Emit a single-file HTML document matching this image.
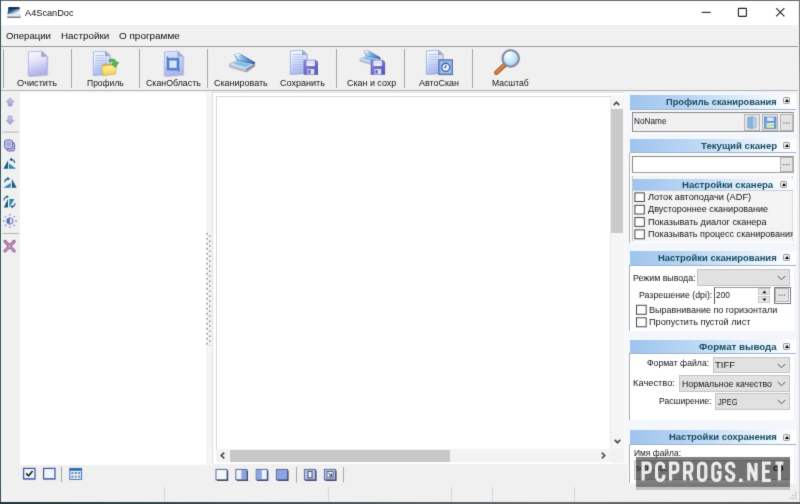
<!DOCTYPE html>
<html>
<head>
<meta charset="utf-8">
<title>A4ScanDoc</title>
<style>
*{box-sizing:border-box;margin:0;padding:0}
html,body{width:800px;height:504px;overflow:hidden;background:#f0f0f0}
body{font-family:"Liberation Sans",sans-serif;font-size:9.2px;color:#1a1a1a;position:relative}
.abs{position:absolute}
#win{position:absolute;left:0;top:0;width:800px;height:504px;background:#f0f0f0;overflow:hidden;will-change:transform;opacity:.9999;filter:url(#soft)}
#titlebar{position:absolute;left:1px;top:1px;width:797px;height:24px;background:#ffffff}
#title{position:absolute;left:25px;top:5px;font-size:10.4px;line-height:14px;color:#222;transform-origin:0 50%;transform:scaleX(.9);white-space:nowrap}
#menubar{position:absolute;left:1px;top:25px;width:797px;height:21px;background:#f1f1f1}
.mi{position:absolute;top:4px;font-size:10.6px;line-height:14px;color:#222;white-space:nowrap;transform-origin:0 50%;transform:scaleX(.92)}
#toolbar{position:absolute;left:1px;top:46px;width:797px;height:45px;background:#f0f0f0;border-top:1px solid #9a9a9a;border-bottom:1px solid #b4b4b4}
.tsep{position:absolute;top:49px;width:1px;height:39px;background:#a8a8a8}
.tl{position:absolute;top:77px;height:12px;line-height:12px;font-size:9.3px;color:#222;text-align:center;white-space:nowrap}
.ico{position:absolute}
#leftbar{position:absolute;left:2px;top:92px;width:18px;height:392px;background:#f0f0f0}
#list{position:absolute;left:20px;top:92px;width:186px;height:373px;background:#fff}
#split{position:absolute;left:206px;top:92px;width:7px;height:373px;background:#f5f5f5}
#canvas{position:absolute;left:212px;top:92px;width:413px;height:372px;background:#fff;border-left:1px solid #e0e0e0;border-top:1px solid #e4e4e4}
#cinner{position:absolute;left:2.500px;top:2.500px;width:395.500px;height:354.500px;border:1px solid #d6d6d6;border-right-color:#e8e8e8;border-bottom-color:#e8e8e8;background:#fff}
#vsb{position:absolute;left:398px;top:2px;width:13px;height:354px;background:#f5f5f5}
#hsb{position:absolute;left:3px;top:356px;width:395px;height:13px;background:#f3f3f3}
#rpanel{position:absolute;left:627px;top:92px;width:170px;height:392px;background:#f3f7fc}
.hdr{position:absolute;height:15px;background:linear-gradient(90deg,#9fc4ee 0%,#b9d5f3 35%,#e6f0fb 75%,#ffffff 100%);border-bottom:1px solid #9fb4cc}
.hdr span{position:absolute;right:19px;top:1px;font-weight:bold;font-size:9.6px;line-height:13px;color:#1c5a72;white-space:nowrap}
.cb{position:absolute;width:7px;height:7px;background:#ececec;border:1px solid #999;border-radius:1.500px}
.cb:after{content:"";position:absolute;left:1px;top:1px;border-left:2px solid transparent;border-right:2px solid transparent;border-bottom:3px solid #000}
.chk{position:absolute;width:10.400px;height:9.800px;background:#fff;border:1px solid #4a4a4a}
.tx{position:absolute;height:12px;line-height:12px;white-space:nowrap;transform-origin:0 50%}
.combo{position:absolute;background:#e1e1e1;border:1px solid #c4c4c4}
.combo span{position:absolute;left:3px;top:2px;line-height:12px;white-space:nowrap}
.combo svg{position:absolute;right:3px;top:5px}
.btn{position:absolute;background:#e4e4e4;border:1px solid #b4b4b4}
#status{position:absolute;left:1px;top:485px;width:797px;height:17px;background:#f0f0f0}
</style>
</head>
<body>
<div id="win">
  <div class="abs" style="left:0;top:0;width:800px;height:1px;background:#6c6c6c"></div>
  <div class="abs" style="left:0;top:0;width:1.3px;height:504px;background:#33555c"></div>
  <div class="abs" style="left:1.300px;top:25px;width:1px;height:477px;background:#fafafa"></div>
  <div class="abs" style="left:798px;top:1px;width:1.200px;height:502px;background:#f1f3f5"></div>
  <div class="abs" style="left:799px;top:0;width:1px;height:504px;background:linear-gradient(180deg,#757575 0%,#8a8a8a 12%,#c4c4c4 30%,#d8dadc 60%,#cfd3d6 100%)"></div>
  <div class="abs" style="left:0;top:501.500px;width:800px;height:1px;background:#d4e4ec"></div>
  <div class="abs" style="left:0;top:502.400px;width:800px;height:1.600px;background:linear-gradient(90deg,#26343c 0%,#4a545a 40%,#6a6a6a 70%,#5a5a5a 100%)"></div>

  <div id="titlebar"></div>
    <!-- title icon -->
  <svg class="ico" style="left:6px;top:6px" width="16" height="13" viewBox="0 0 16 13">
    <defs><linearGradient id="gTi" x1="0" y1="0" x2="1" y2="1"><stop offset="0" stop-color="#0c2446"/><stop offset=".42" stop-color="#2c5686"/><stop offset=".75" stop-color="#dce8f4"/><stop offset="1" stop-color="#ffffff"/></linearGradient></defs>
    <path d="M2.600 1.200 H13.400 L14.600 8 H1.400 Z" fill="url(#gTi)"/>
    <path d="M2.600 1.200 H13.400 L13.700 2.800 H2.300 Z" fill="#0e2240"/>
    <path d="M1.400 8 H14.600 L14.800 11 H1.200 Z" fill="#d4dce6"/>
    <path d="M2.600 8.400 H13.400 L13.600 9.600 H2.400 Z" fill="#f4f8fc"/>
    <path d="M1.200 10.800 H14.800 L14.600 11.800 H1.400 Z" fill="#46525e"/>
  </svg>
  <!-- window controls -->
  <svg class="ico" style="left:690px;top:1px" width="108" height="24" viewBox="0 0 108 24">
    <path d="M11.700 11.400 H20.700" stroke="#222" stroke-width="1.100"/>
    <rect x="48.400" y="7.400" width="8" height="8" fill="none" stroke="#222" stroke-width="1.100" rx=".6"/>
    <path d="M86.200 7.200 L94.400 15.400 M94.400 7.200 L86.200 15.400" stroke="#222" stroke-width="1.100"/>
  </svg>
  <div id="menubar">
              </div>
  <div id="toolbar"></div>
  <svg width="0" height="0" style="position:absolute">
    <defs>
      <filter id="soft" x="0" y="0" width="100%" height="100%" color-interpolation-filters="sRGB"><feConvolveMatrix order="3" kernelMatrix="0.012 0.082 0.012 0.082 0.624 0.082 0.012 0.082 0.012" divisor="1" edgeMode="duplicate" preserveAlpha="true"/></filter>
      <linearGradient id="gPage" x1="0" y1="0" x2="0.25" y2="1">
        <stop offset="0" stop-color="#fbfbff"/><stop offset=".45" stop-color="#e4e4fa"/><stop offset="1" stop-color="#b2b2ea"/>
      </linearGradient>
      <linearGradient id="gPageB" x1="0" y1="0" x2="0.3" y2="1">
        <stop offset="0" stop-color="#f8faff"/><stop offset=".5" stop-color="#d8e2fa"/><stop offset="1" stop-color="#aab8ee"/>
      </linearGradient>
      <linearGradient id="gFold" x1="0" y1="1" x2="1" y2="0">
        <stop offset="0" stop-color="#8890b8"/><stop offset="1" stop-color="#d8dcf0"/>
      </linearGradient>
      <linearGradient id="gFolder" x1="0" y1="0" x2="0" y2="1">
        <stop offset="0" stop-color="#fff6a8"/><stop offset="1" stop-color="#f0cc58"/>
      </linearGradient>
      <linearGradient id="gFloppy" x1="0" y1="0" x2="1" y2="1">
        <stop offset="0" stop-color="#8e90e0"/><stop offset="1" stop-color="#5252b4"/>
      </linearGradient>
      <linearGradient id="gScan" x1="0" y1="0" x2="1" y2="0">
        <stop offset="0" stop-color="#e8f4ff"/><stop offset=".5" stop-color="#6aa8e4"/><stop offset="1" stop-color="#2858b0"/>
      </linearGradient>
      <radialGradient id="gLens" cx=".4" cy=".35" r=".7">
        <stop offset="0" stop-color="#f4fcff"/><stop offset=".6" stop-color="#c4e6fa"/><stop offset="1" stop-color="#8cc4ec"/>
      </radialGradient>
      <linearGradient id="gHandle" x1="0" y1="0" x2="1" y2="1">
        <stop offset="0" stop-color="#f0a060"/><stop offset="1" stop-color="#b86028"/>
      </linearGradient>
      <symbol id="sPage" viewBox="0 0 32 32">
        <path d="M8.4 5.4 L21.5 4.6 L26.6 9.6 L26.4 28.2 L8.2 29.6 Z" fill="#8c8ca8" opacity=".35" transform="translate(.8,.6)"/>
        <path d="M7.4 4.8 L20.8 4.2 L26 9.2 L26 27.6 L7.2 29 Z" fill="url(#gPage)" stroke="#a4a4d8" stroke-width=".7"/>
        <path d="M20.8 4.2 L26 9.2 L20.6 9.6 Z" fill="url(#gFold)" stroke="#8c90b8" stroke-width=".5"/>
      </symbol>
      <symbol id="sDoc" viewBox="0 0 32 32">
        <path d="M4.4 4.8 L16.6 4.2 L21 8.6 L21 27.2 L4.2 28.4 Z" fill="#8c8ca8" opacity=".35" transform="translate(.8,.6)"/>
        <path d="M4.4 4.8 L16.6 4.2 L21 8.6 L21 27.2 L4.2 28.4 Z" fill="url(#gPageB)" stroke="#8ea6d8" stroke-width=".7"/>
        <path d="M16.6 4.2 L21 8.6 L16.4 9 Z" fill="url(#gFold)" stroke="#8c90b8" stroke-width=".5"/>
        <g stroke="#9cb2e4" stroke-width=".9" opacity=".7">
          <path d="M6.5 8.5h8.5M6.5 11h11.5M6.5 13.5h11.5M6.5 16h11.5M6.5 18.5h11.5M6.5 21h11.5M6.5 23.500h11.5"/>
        </g>
      </symbol>
      <symbol id="sFloppy" viewBox="0 0 16 17">
        <path d="M1 1.2 H13.2 L15.4 3.4 V16 H1 Z" fill="url(#gFloppy)" stroke="#4a4aa0" stroke-width=".5"/>
        <rect x="3.6" y="1.6" width="8.6" height="5.6" fill="#eef0fc"/>
        <rect x="4" y="3.4" width="7.8" height=".9" fill="#c4c8e8"/>
        <rect x="4.6" y="10.4" width="7" height="5.4" fill="#dfe1f4"/>
        <rect x="5.6" y="11.4" width="2.2" height="3.6" fill="#5a5ab8"/>
      </symbol>
      <symbol id="sScanner" viewBox="0 0 28 20">
        <path d="M2 14.5 L9 10 L27 13 L19 19.500 Z" fill="#55607a" opacity=".45"/>
        <path d="M1.4 11.2 L9 7.4 L26.6 10.6 L26.600 13.200 L17.6 18.6 L1.4 13.8 Z" fill="#dfe6f0" stroke="#8894aa" stroke-width=".6"/>
        <path d="M1.4 11.2 L17.6 15.8 L17.6 18.6 L1.4 13.8 Z" fill="#b8c2d2"/>
        <path d="M17.6 15.8 L26.6 10.6 L26.600 13.200 L17.6 18.6 Z" fill="#8a94aa"/>
        <path d="M4.6 10.6 L9.4 8.4 L23.6 11 L17.4 14.4 Z" fill="#7ec0f0"/>
        <path d="M6.5 1.600 L11.5 0.8 L27 9.6 L26.2 11 L9.5 7.2 Z" fill="url(#gScan)" stroke="#34508c" stroke-width=".6"/>
        <path d="M6.5 1.600 L11.5 0.8 L13 1.8 L8.5 3 Z" fill="#f4f8ff"/>
      </symbol>
    </defs>
  </svg>

  <div class="tsep" style="left:3px"></div>
  <div class="tsep" style="left:71px"></div>
  <div class="tsep" style="left:139px"></div>
  <div class="tsep" style="left:207px"></div>
  <div class="tsep" style="left:336px"></div>
  <div class="tsep" style="left:404px"></div>
  <div class="tsep" style="left:472px"></div>

  <!-- 1 Очистить -->
  <svg class="ico" style="left:21px;top:47px" width="32" height="32"><use href="#sPage"/></svg>
  
  <!-- 2 Профиль -->
  <svg class="ico" style="left:89px;top:47px" width="32" height="32" viewBox="0 0 32 32">
    <use href="#sDoc"/>
    <path d="M13.400 17.800 L17.400 16.600 L19 17.800 L26.600 16.400 L26.600 26.800 L13.800 28.600 Z" fill="#e4b43c" stroke="#c49828" stroke-width=".4"/>
    <path d="M13 19.600 L27.200 17.600 L26.600 26.800 L13.800 28.800 Z" fill="url(#gFolder)" stroke="#d0a830" stroke-width=".4"/>
    <path d="M20.400 12.600 C24 11.200 27 12.600 27.400 15.600 L29.600 15.200 L26.400 20.400 L22.400 17 L24.600 16.600 C24.400 14.800 22.800 14 20.400 14.800 Z" fill="#58bc4c" stroke="#2c8428" stroke-width=".6"/>
  </svg>
  
  <!-- 3 СканОбласть -->
  <svg class="ico" style="left:157px;top:47px" width="32" height="32" viewBox="0 0 32 32">
    <use href="#sPage"/>
    <path d="M7.4 4.8 L20.8 4.2 L26 9.2 L26 27.6 L7.2 29 Z" fill="#9cc0f8" opacity=".35"/>
    <rect x="11" y="12.200" width="10" height="10" fill="#d4e6ff" stroke="#5a82c8" stroke-width="2.700"/>
    <path d="M10.400 9.600v3M21.600 21v3.400" stroke="#5a82c8" stroke-width="1.500"/>
  </svg>
  
  <!-- 4 Сканировать -->
  <svg class="ico" style="left:228px;top:52.500px" width="28" height="20"><use href="#sScanner"/></svg>
  
  <!-- 5 Сохранить -->
  <svg class="ico" style="left:286px;top:46px" width="32" height="32" viewBox="0 0 32 32"><use href="#sDoc"/></svg>
  <svg class="ico" style="left:302.500px;top:58.500px" width="15.500" height="16.500"><use href="#sFloppy"/></svg>
  
  <!-- 6 Скан и сохр -->
  <svg class="ico" style="left:357.500px;top:49.500px" width="24" height="16"><use href="#sScanner"/></svg>
  <svg class="ico" style="left:370px;top:58.500px" width="15.500" height="16.500"><use href="#sFloppy"/></svg>
  
  <!-- 7 АвтоСкан -->
  <svg class="ico" style="left:422px;top:46px" width="32" height="32" viewBox="0 0 32 32"><use href="#sDoc"/></svg>
  <svg class="ico" style="left:437.500px;top:59px" width="15.500" height="16.500" viewBox="0 0 16 17">
    <rect x=".8" y=".8" width="14.4" height="15.400" fill="#7e9cd0" stroke="#4a5c94" stroke-width=".8"/>
    <rect x="2.4" y="2.400" width="11.200" height="12.200" fill="#a4c0ea"/>
    <circle cx="8" cy="8.600" r="4.200" fill="#eaf4ff" stroke="#3c64b4" stroke-width="1.400"/>
    <path d="M8 6.200v2.600h-1.600" stroke="#24408c" stroke-width="1" fill="none"/>
  </svg>
  
  <!-- 8 Масштаб -->
  <svg class="ico" style="left:492px;top:47px" width="32" height="32" viewBox="0 0 32 32">
    <path d="M13.4 17.200 L4.4 25.600" stroke="#8c4a20" stroke-width="4.600" stroke-linecap="round"/>
    <path d="M13.4 17.200 L4.4 25.600" stroke="url(#gHandle)" stroke-width="3.200" stroke-linecap="round"/>
    <circle cx="18.700" cy="11.400" r="8" fill="url(#gLens)" stroke="#8c98ac" stroke-width="2"/>
    <circle cx="18.700" cy="11.400" r="8.900" fill="none" stroke="#5c6880" stroke-width=".5"/>
    <path d="M13.600 9.200 C14.600 6.400 17.400 5 20 5.400" stroke="#ffffff" stroke-width="1.400" fill="none" opacity=".9"/>
  </svg>
  
  <div id="leftbar"></div>
  <div id="list"></div>
  <div id="split"></div>
  <div id="canvas">
    <div id="cinner"></div>
    <div id="vsb">
      <div class="abs" style="left:0;top:13.500px;width:12px;height:124.500px;background:#cacaca"></div>
      <svg class="abs" style="left:2.400px;top:5.800px" width="7" height="5" viewBox="0 0 7 5"><path d="M.7 4.200 L3.500 1.300 L6.300 4.200" stroke="#505050" stroke-width="1.700" fill="none"/></svg>
      <svg class="abs" style="left:2.600px;top:344px" width="7" height="5" viewBox="0 0 7 5"><path d="M.7 .8 L3.500 3.700 L6.300 .8" stroke="#505050" stroke-width="1.700" fill="none"/></svg>
    </div>
    <div id="hsb">
      <div class="abs" style="left:14px;top:1px;width:220px;height:11.500px;background:#c8c8c8"></div>
      <svg class="abs" style="left:3.800px;top:2.900px" width="5" height="7" viewBox="0 0 5 7"><path d="M4.200 .7 L1.300 3.500 L4.200 6.300" stroke="#484848" stroke-width="1.700" fill="none"/></svg>
      <svg class="abs" style="left:385px;top:2.900px" width="5" height="7" viewBox="0 0 5 7"><path d="M.8 .7 L3.700 3.500 L.8 6.300" stroke="#505050" stroke-width="1.700" fill="none"/></svg>
    </div>
    <div class="abs" style="left:398px;top:356px;width:14px;height:13.500px;background:#f2f2f2"></div>
  </div>
  <!-- left vertical toolbar icons -->
  <svg class="ico" style="left:2px;top:92px" width="18" height="170" viewBox="0 0 18 170">
    <defs>
      <linearGradient id="gArr" x1="0" y1="0" x2="0" y2="1"><stop offset="0" stop-color="#ccd0ea"/><stop offset="1" stop-color="#989fcf"/></linearGradient>
    </defs>
    <!-- up arrow  (y 98-106 abs => 6-14 local) -->
    <path d="M8.100 5.800 L12 10 L10 10 L10 13.900 L6.200 13.900 L6.200 10 L4.200 10 Z" fill="url(#gArr)" stroke="#8a92c2" stroke-width=".6"/>
    <!-- down arrow (abs 115.7-124.6 => 23.7-32.6) -->
    <path d="M8.100 32.600 L12 28.300 L10 28.300 L10 24 L6.200 24 L6.200 28.300 L4.200 28.300 Z" fill="url(#gArr)" stroke="#8a92c2" stroke-width=".6"/>
    <!-- separator abs y=132 -->
    <rect x=".8" y="39.600" width="16" height="1" fill="#b4b4b4"/>
    <!-- copy icon abs 139.8-151.4 => 47.8-59.400; x 4.5-14.6 => 2.5-12.6 -->
    <rect x="4.600" y="50.400" width="8" height="8.600" rx="2" fill="#b4b4e0" stroke="#6c6cb0" stroke-width="1"/>
    <rect x="2.600" y="48" width="8" height="8.600" rx="2" fill="#c8c8ee" stroke="#6c6cb0" stroke-width="1"/>
    <rect x="4.400" y="50" width="4.400" height="4.600" fill="#a8a8dc"/>
    <!-- rotate-left -->
    <path d="M1.400 76.700 L6.100 68.200 L6.100 76.700 Z" fill="#1c5c84"/>
    <path d="M7 71.600 L7 76.700 L14.200 76.700 Z" fill="#2c88b0"/>
    <path d="M12.600 71 C12.600 68.600 11 67.400 9.200 67.600" stroke="#1c5c84" stroke-width="1.200" fill="none"/>
    <path d="M7.400 67.600 L10 65.600 L10 69.600 Z" fill="#1c5c84"/>
    <!-- rotate-right -->
    <path d="M14.600 95.800 L9.800 86.800 L9.800 95.800 Z" fill="#1c5c84"/>
    <path d="M8.600 91 L8.600 95.800 L1.400 95.800 Z" fill="#2c88b0"/>
    <path d="M2.800 90.200 C2.800 87.800 4.400 86.600 6.200 86.800" stroke="#1c5c84" stroke-width="1.200" fill="none"/>
    <path d="M8 86.800 L5.400 84.800 L5.400 88.800 Z" fill="#1c5c84"/>
    <!-- flip -->
    <path d="M1.800 115.400 L6 107 L6 115.400 Z" fill="#1c5c84"/>
    <path d="M7.400 106 L7.400 114.400 L12.400 106 Z" fill="#2c88b0" transform="translate(0,1)"/>
    <path d="M2 108.400 C2 105.800 3.600 104.600 5.400 104.800" stroke="#1c5c84" stroke-width="1.100" fill="none"/>
    <path d="M6.800 104.800 L4.600 103 L4.600 106.600 Z" fill="#1c5c84"/>
    <path d="M13 111 C13 113.600 11.600 114.800 9.800 114.600" stroke="#1c5c84" stroke-width="1.100" fill="none"/>
    <path d="M8.400 114.600 L10.600 112.800 L10.600 116.400 Z" fill="#1c5c84"/>
    <!-- brightness abs centre (9.8,221) => (7.8,129) -->
    <circle cx="7.800" cy="129" r="3.300" fill="#5a68b0" stroke="#8c98d0" stroke-width="1"/>
    <path d="M7.800 126.600 A2.400 2.400 0 0 1 7.800 131.400 Z" fill="#e8ecfa"/>
    <g fill="#9098c8">
      <circle cx="7.800" cy="122.800" r=".9"/><circle cx="7.800" cy="135.200" r=".9"/>
      <circle cx="1.600" cy="129" r=".9"/><circle cx="14" cy="129" r=".9"/>
      <circle cx="3.400" cy="124.600" r=".9"/><circle cx="12.200" cy="124.600" r=".9"/>
      <circle cx="3.400" cy="133.400" r=".9"/><circle cx="12.200" cy="133.400" r=".9"/>
    </g>
    <!-- separator abs y=233.5 -->
    <rect x=".8" y="141" width="16" height="1" fill="#b4b4b4"/>
    <!-- X icon abs y 240.3-252; x 4-15.2 => 2-13.2 -->
    <path d="M3 149.400 L12.200 159 M12.200 149.400 L3 159" stroke="#8c5088" stroke-width="3" stroke-linecap="round"/>
    <path d="M3 149.400 L12.200 159 M12.200 149.400 L3 159" stroke="#d4a4cc" stroke-width="1.300" stroke-linecap="round"/>
  </svg>

  <!-- splitter dots -->
  <svg class="ico" style="left:206px;top:232px" width="7" height="116" viewBox="0 0 7 116">
    <defs><pattern id="pDots" x="0" y="0.950" width="7" height="5" patternUnits="userSpaceOnUse">
      <rect x=".45" y="0" width="1.500" height="1.500" fill="#8c8c8c"/><rect x="3.050" y="2.500" width="1.500" height="1.500" fill="#8c8c8c"/></pattern></defs>
    <rect x="0" y="0.950" width="7" height="113" fill="url(#pDots)"/>
  </svg>

  <!-- bottom-left small toolbar -->
  <svg class="ico" style="left:20px;top:465px" width="70" height="19" viewBox="0 0 70 19">
    <rect x="3.600" y="3.400" width="11.400" height="10.400" fill="#f2f4fc" stroke="#4c5c98" stroke-width="1.300"/>
    <path d="M3.600 14.200h11.800" stroke="#5c78c0" stroke-width="1"/>
    <path d="M6.200 8.400 L8.600 10.800 L12.600 6" stroke="#222" stroke-width="1.600" fill="none"/>
    <rect x="23.600" y="3.400" width="11.400" height="10.400" fill="#f2f4fc" stroke="#4c5c98" stroke-width="1.300"/>
    <path d="M23.600 14.200h11.800" stroke="#5c78c0" stroke-width="1"/>
    <rect x="41" y="1.600" width="1" height="15.400" fill="#a8a8a8"/>
    <rect x="49.800" y="3.400" width="11.800" height="11" fill="#e8f0fc" stroke="#3c78b8" stroke-width="1"/>
    <rect x="49.800" y="3.400" width="11.800" height="2.400" fill="#2c6cb0"/>
    <g fill="#5c88c0"><rect x="51.400" y="7" width="2" height="2"/><rect x="54.800" y="7" width="2" height="2"/><rect x="58.200" y="7" width="2" height="2"/>
    <rect x="51.400" y="10.600" width="2" height="2"/><rect x="54.800" y="10.600" width="2" height="2" fill="#a88848"/><rect x="58.200" y="10.600" width="2" height="2"/></g>
  </svg>

  <!-- bottom-centre small toolbar -->
  <svg class="ico" style="left:213px;top:465px" width="140" height="19" viewBox="0 0 140 19">
    <g stroke="#5c6c9c" stroke-width="1">
      <rect x="3" y="4.400" width="11" height="10.400" fill="#f4f6fc"/>
      <rect x="22.800" y="4.400" width="11" height="10.400" fill="#eef2fc"/>
      <rect x="43.200" y="4.400" width="11" height="10.400" fill="#eef2fc"/>
      <rect x="63.400" y="4.400" width="11" height="10.400" fill="#8ca4e4"/>
    </g>
    <rect x="28.400" y="5" width="5" height="9.400" fill="#8ca4e4"/>
    <rect x="43.800" y="5" width="5" height="9.400" fill="#8ca4e4"/>
    <path d="M4 15.400h11.200M24 15.400h11.200M44 15.400h11.200M64.400 15.400h11.200M14.600 5.400v10M34.400 5.400v10M54.800 5.400v10M75 5.400v10" stroke="#434c70" stroke-width="1.200"/>
    <rect x="83" y="2" width="1" height="15.400" fill="#a8a8a8"/>
    <rect x="91.400" y="4.400" width="11" height="10.400" fill="#b8c4e0" stroke="#5c6c9c" stroke-width="1"/>
    <rect x="95" y="6.400" width="4" height="6.400" fill="#f4f8ff" stroke="#3c4c7c" stroke-width="1"/>
    <path d="M92.400 15.400h11.200M103 5.400v10" stroke="#434c70" stroke-width="1.200"/>
    <rect x="111.400" y="4.400" width="11" height="10.400" fill="#b8c4e0" stroke="#5c6c9c" stroke-width="1"/>
    <rect x="114" y="6.400" width="6" height="6.400" fill="#f4f8ff" stroke="#3c4c7c" stroke-width=".8"/>
    <path d="M115.400 7.800 L118.600 11.200 M118.600 8.800 V11.200 H116.200" stroke="#24345c" stroke-width="1" fill="none"/>
    <path d="M112.400 15.400h11.200M123 5.400v10" stroke="#434c70" stroke-width="1.200"/>
    <rect x="130" y="2" width="1" height="15.400" fill="#a8a8a8"/>
  </svg>
  <div class="abs" style="left:624px;top:92px;width:5px;height:373px;background:#f8f8f8"></div>
  <div id="rpanel">
    <!-- coordinates local to rpanel: abs x-627, abs y-92 -->
    <!-- Section 1: Профиль сканирования, header abs y 95-110, x 630-796 -->
    <div class="abs" style="left:3px;top:18px;width:167px;height:24px;background:#f7f9fc"></div>
    <div class="hdr" style="left:3px;top:3px;width:166px"></div>
    <div class="cb" style="left:156px;top:5px"></div>
    <div class="abs" style="left:5px;top:20px;width:162px;height:20px;background:#f0f0f0;border:1px solid #888;border-right-color:#b0b0b0;border-bottom-color:#959595"></div>
    
    <div class="btn" style="left:117px;top:22px;width:16px;height:17px"></div>
    <div class="btn" style="left:135px;top:22px;width:16px;height:17px"></div>
    <div class="btn" style="left:153px;top:22px;width:13px;height:17px"></div>
    <svg class="ico" style="left:117px;top:22px" width="50" height="17" viewBox="0 0 50 17">
      <path d="M3.600 3.400 L8.400 2.600 L8.400 14.400 L3.600 13.800 Z" fill="#8cb4dc" stroke="#6c94c4" stroke-width=".5"/>
      <path d="M8.400 2.600 L12 4.200 L12 13.400 L8.400 14.400 Z" fill="#b4d0ec" stroke="#6c94c4" stroke-width=".5"/>
      <rect x="20.600" y="3" width="11.400" height="11.400" fill="#6a9cdc" stroke="#4c7cc0" stroke-width=".6"/>
      <rect x="23" y="3.400" width="6.600" height="3.600" fill="#d8e8fc"/>
      <rect x="22.600" y="9" width="7.400" height="4.600" fill="#e8f0d0"/>
      <rect x="22.600" y="10.600" width="7.400" height="1.400" fill="#b8d490"/>
      <g fill="#666"><rect x="39.400" y="8.400" width="1.200" height="1.200"/><rect x="42" y="8.400" width="1.200" height="1.200"/><rect x="44.600" y="8.400" width="1.200" height="1.200"/></g>
    </svg>

    <!-- Section 2: Текущий сканер header abs y 139.5-152.5 -->
    <div class="abs" style="left:2px;top:61px;width:168px;height:90px;background:#f9fafc;border-left:1px solid #b6b6b6"></div>
    <div class="hdr" style="left:3px;top:47px;width:166px;height:14px"></div>
    <div class="cb" style="left:156px;top:50px"></div>
    <div class="abs" style="left:5px;top:64px;width:162px;height:17px;background:#fff;border:1px solid #888;border-right-color:#b0b0b0;border-bottom-color:#a0a0a0"></div>
    <div class="btn" style="left:153px;top:65px;width:13px;height:15px"></div>
    <svg class="ico" style="left:153px;top:65px" width="13" height="15"><g fill="#666"><rect x="3.200" y="7" width="1.200" height="1.200"/><rect x="5.800" y="7" width="1.200" height="1.200"/><rect x="8.400" y="7" width="1.200" height="1.200"/></g></svg>

    <!-- Sub-section: Настройки сканера abs y 179-190, x 633-792 -->
    <div class="abs" style="left:5px;top:84px;width:161px;height:65px;background:#f4f4f4;border-left:1px solid #c4c4c4;border-right:1px solid #dcdcdc"></div>
    <div class="hdr" style="left:6px;top:87px;width:160px;height:12px;border-bottom-color:#c4d0dc"></div>
    <div class="cb" style="left:153px;top:89px"></div>





    <!-- Section 3: Настройки сканирования header abs y 250.6-265 -->
    <div class="abs" style="left:2px;top:173px;width:165px;height:66px;background:#fff;border-left:1px solid #b0b0b0"></div>
    <div class="hdr" style="left:3px;top:158.500px;width:166px;height:15px"></div>
    <div class="cb" style="left:156px;top:162px"></div>
    
    <div class="combo" style="left:70px;top:176.500px;width:93px;height:17px"><svg width="9" height="6" viewBox="0 0 9 6"><path d="M.8 1l3.700 3.700L8.200 1" stroke="#555" stroke-width="1" fill="none"/></svg></div>
    
    <div class="abs" style="left:86.500px;top:194.500px;width:57px;height:17px;background:#fff;border-left:1px solid #555;border-top:1px solid #999"></div>
    
    <div class="abs" style="left:130.500px;top:195.500px;width:12.500px;height:7.500px;background:#e8e8e8;border:1px solid #c8c8c8"></div>
    <div class="abs" style="left:130.500px;top:203.500px;width:12.500px;height:7.500px;background:#e8e8e8;border:1px solid #c8c8c8"></div>
    <svg class="ico" style="left:130.500px;top:195.500px" width="13" height="16" viewBox="0 0 13 16"><path d="M4.200 5.200 L6.400 2.400 L8.600 5.200 Z M4.200 10.400 L6.400 13.200 L8.600 10.400 Z" fill="#222"/></svg>
    <div class="abs" style="left:146.500px;top:194.500px;width:17px;height:17px;background:#fff;border:1px solid #7a7a7a"></div>
    <div class="btn" style="left:148px;top:196px;width:14px;height:14px"></div>
    <svg class="ico" style="left:148px;top:196px" width="14" height="14"><g fill="#666"><rect x="3.600" y="6.600" width="1.200" height="1.200"/><rect x="6.200" y="6.600" width="1.200" height="1.200"/><rect x="8.800" y="6.600" width="1.200" height="1.200"/></g></svg>



    <!-- Section 4: Формат вывода header abs y 339.5-353 -->
    <div class="abs" style="left:2px;top:261px;width:165px;height:67px;background:#fff;border-left:1px solid #b0b0b0"></div>
    <div class="hdr" style="left:3px;top:247.500px;width:166px;height:14px"></div>
    <div class="cb" style="left:156px;top:250.500px"></div>
    
    <div class="combo" style="left:85.500px;top:264.500px;width:77px;height:16.500px"><svg width="9" height="6" viewBox="0 0 9 6"><path d="M.8 1l3.700 3.700L8.200 1" stroke="#555" stroke-width="1" fill="none"/></svg></div>
    
    <div class="combo" style="left:52px;top:282.500px;width:110.500px;height:17px"><svg width="9" height="6" viewBox="0 0 9 6"><path d="M.8 1l3.700 3.700L8.200 1" stroke="#555" stroke-width="1" fill="none"/></svg></div>
    
    <div class="combo" style="left:87.500px;top:301px;width:75px;height:16.500px"><svg width="9" height="6" viewBox="0 0 9 6"><path d="M.8 1l3.700 3.700L8.200 1" stroke="#555" stroke-width="1" fill="none"/></svg></div>

    <svg class="ico" style="left:0;top:0" width="170" height="392" viewBox="0 0 170 392"><g fill="#fff" stroke="#474747" stroke-width="1"><rect x="7.90" y="100.90" width="9.40" height="8.60"/><rect x="7.90" y="113.30" width="9.40" height="8.70"/><rect x="7.90" y="125.60" width="9.40" height="8.80"/><rect x="7.90" y="137.90" width="9.40" height="8.90"/><rect x="9.50" y="213.30" width="9.70" height="9.00"/><rect x="9.50" y="225.80" width="9.70" height="9.00"/></g></svg>
    <!-- Section 5: Настройки сохранения header abs y 430-444 -->
    <div class="abs" style="left:2px;top:352px;width:165px;height:39px;background:#fff;border-left:1px solid #b0b0b0"></div>
    <div class="hdr" style="left:3px;top:338px;width:166px;height:15px"></div>
    <div class="cb" style="left:156px;top:341.500px"></div>
    
    <div class="abs" style="left:6.500px;top:367.500px;width:156px;height:20px;background:#e3e3e3;border:1px solid #c8c8c8"></div>
    <div class="abs" style="left:146px;top:372px;font-size:9px;line-height:9px;font-weight:bold;color:#1a2440">ср</div>
    
  </div>
  <div id="status"></div>
  <!-- status bar separators & grip -->
  <div class="abs" style="left:164px;top:487px;width:1px;height:15px;background:#d6d6d6"></div>
  <div class="abs" style="left:328px;top:487px;width:1px;height:15px;background:#d6d6d6"></div>
  <div class="abs" style="left:451px;top:487px;width:1px;height:15px;background:#d6d6d6"></div>
  <div class="abs" style="left:492px;top:487px;width:1px;height:15px;background:#d6d6d6"></div>
  <div class="abs" style="left:574px;top:487px;width:1px;height:15px;background:#d6d6d6"></div>
  <svg class="ico" style="left:788px;top:491px" width="10" height="10" viewBox="0 0 10 10"><g fill="#b6b6b6"><rect x="7" y="1" width="1.400" height="1.400"/><rect x="4.400" y="3.800" width="1.400" height="1.400"/><rect x="7" y="3.800" width="1.400" height="1.400"/><rect x="1.800" y="6.600" width="1.400" height="1.400"/><rect x="4.400" y="6.600" width="1.400" height="1.400"/><rect x="7" y="6.600" width="1.400" height="1.400"/></g></svg>
  <div class="tx" style="left:25.0px;top:6.97px;font-size:9.6px;color:#0c0c0c;transform:scaleX(0.9591)">A4ScanDoc</div>
  <div class="tx" style="left:6.2px;top:29.84px;font-size:9.7px;color:#0c0c0c;transform:scaleX(0.9928)">Операции</div>
  <div class="tx" style="left:61.2px;top:29.84px;font-size:9.7px;color:#0c0c0c;transform:scaleX(1.0144)">Настройки</div>
  <div class="tx" style="left:119.2px;top:29.84px;font-size:9.7px;color:#0c0c0c;transform:scaleX(1.0259)">О программе</div>
  <div class="tx" style="left:17.0px;top:76.88px;font-size:9px;color:#141414;transform:scaleX(1.0207)">Очистить</div>
  <div class="tx" style="left:86.7px;top:76.88px;font-size:9px;color:#141414;transform:scaleX(0.9470)">Профиль</div>
  <div class="tx" style="left:146.0px;top:76.88px;font-size:9px;color:#141414;transform:scaleX(0.9797)">СканОбласть</div>
  <div class="tx" style="left:214.0px;top:76.88px;font-size:9px;color:#141414;transform:scaleX(0.9953)">Сканировать</div>
  <div class="tx" style="left:280.0px;top:76.88px;font-size:9px;color:#141414;transform:scaleX(1.0059)">Сохранить</div>
  <div class="tx" style="left:346.5px;top:76.88px;font-size:9px;color:#141414;transform:scaleX(0.9908)">Скан и сохр</div>
  <div class="tx" style="left:419.0px;top:76.88px;font-size:9px;color:#141414;transform:scaleX(0.9942)">АвтоСкан</div>
  <div class="tx" style="left:492.3px;top:76.88px;font-size:9px;color:#141414;transform:scaleX(0.9529)">Масштаб</div>
  <div class="tx" style="left:666.4px;top:95.81px;font-size:9.2px;color:#164e62;transform:scaleX(1.0055);font-weight:bold">Профиль сканирования</div>
  <div class="tx" style="left:700.6px;top:140.11px;font-size:9.2px;color:#164e62;transform:scaleX(1.0485);font-weight:bold">Текущий сканер</div>
  <div class="tx" style="left:682.3px;top:178.81px;font-size:9.2px;color:#164e62;transform:scaleX(1.0455);font-weight:bold">Настройки сканера</div>
  <div class="tx" style="left:658.3px;top:252.01px;font-size:9.2px;color:#164e62;transform:scaleX(1.0280);font-weight:bold">Настройки сканирования</div>
  <div class="tx" style="left:699.3px;top:340.61px;font-size:9.2px;color:#164e62;transform:scaleX(1.0608);font-weight:bold">Формат вывода</div>
  <div class="tx" style="left:668.9px;top:430.81px;font-size:9.2px;color:#164e62;transform:scaleX(1.0318);font-weight:bold">Настройки сохранения</div>
  <div class="tx" style="left:634.0px;top:114.68px;font-size:9px;color:#141414;transform:scaleX(0.9151)">NoName</div>
  <div class="tx" style="left:647.5px;top:190.98px;font-size:9px;color:#141414;transform:scaleX(1.0233)">Лоток автоподачи (ADF)</div>
  <div class="tx" style="left:647.5px;top:203.28px;font-size:9px;color:#141414;transform:scaleX(1.0050)">Двустороннее сканирование</div>
  <div class="tx" style="left:647.5px;top:215.58px;font-size:9px;color:#141414;transform:scaleX(1.0131)">Показывать диалог сканера</div>
  <div class="abs" style="left:647.5px;top:227.88px;width:145px;height:12px;overflow:hidden"><div class="tx" style="left:0;top:0;font-size:9px;color:#141414;transform:scaleX(1.0030)">Показывать процесс сканирования</div></div>
  <div class="tx" style="left:632.9px;top:272.28px;font-size:9px;color:#141414;transform:scaleX(0.9804)">Режим вывода:</div>
  <div class="tx" style="left:639.0px;top:289.28px;font-size:9px;color:#141414;transform:scaleX(0.9775)">Разрешение (dpi):</div>
  <div class="tx" style="left:715.8px;top:289.28px;font-size:9px;color:#141414;transform:scaleX(0.9247)">200</div>
  <div class="tx" style="left:648.8px;top:303.58px;font-size:9px;color:#141414;transform:scaleX(0.9995)">Выравнивание по горизонтали</div>
  <div class="tx" style="left:648.8px;top:315.68px;font-size:9px;color:#141414;transform:scaleX(1.0145)">Пропустить пустой лист</div>
  <div class="tx" style="left:647.2px;top:356.88px;font-size:9px;color:#141414;transform:scaleX(0.9602)">Формат файла:</div>
  <div class="tx" style="left:715.4px;top:359.48px;font-size:9px;color:#141414;transform:scaleX(1.0579)">TIFF</div>
  <div class="tx" style="left:633.3px;top:376.58px;font-size:9px;color:#141414;transform:scaleX(1.0330)">Качество:</div>
  <div class="tx" style="left:682.0px;top:377.68px;font-size:9px;color:#141414;transform:scaleX(0.9774)">Нормальное качество</div>
  <div class="tx" style="left:658.8px;top:395.08px;font-size:9px;color:#141414;transform:scaleX(0.9548)">Расширение:</div>
  <div class="tx" style="left:717.5px;top:395.78px;font-size:9px;color:#141414;transform:scaleX(0.8292)">JPEG</div>
  <div class="tx" style="left:634.0px;top:446.58px;font-size:9px;color:#141414;transform:scaleX(0.9356)">Имя файла:</div>
  <div class="tx" style="left:636.4px;top:462.32px;font-size:8.6px;color:#333;transform:scaleX(0.9184)">scan.doc</div>
  <!-- watermark -->
  <div class="abs" style="left:636px;top:456.500px;width:153.500px;height:30px;background:rgba(0,0,0,.5)"></div>
  <div class="abs" style="left:636px;top:486.500px;width:153.500px;height:3px;background:rgba(0,0,0,.2)"></div>
  <svg class="ico" style="left:636px;top:456px" width="154" height="31" viewBox="0 0 154 31">
    <g fill="none" stroke="#ececec" stroke-width="3.200" stroke-linejoin="miter" stroke-miterlimit="3">
      <path transform="translate(7.1,7.1)" d="M0,17.3 V0 H4.2 a3.0,3.0 0 0 1 3.0,3.0 V6.200 a3.0,3.0 0 0 1 -3.0,3.0 H0"/>
      <path transform="translate(20.6,7.1)" d="M7.2,5.6 V3.6 a3.6,3.6 0 0 0 -7.2,0 V13.700000000000001 a3.6,3.6 0 0 0 7.2,0 V11.700000000000001"/>
      <path transform="translate(34.6,7.1)" d="M0,17.3 V0 H4.2 a3.0,3.0 0 0 1 3.0,3.0 V6.200 a3.0,3.0 0 0 1 -3.0,3.0 H0"/>
      <path transform="translate(48.6,7.1)" d="M0,17.3 V0 H4.2 a3.0,3.0 0 0 1 3.0,3.0 V6.200 a3.0,3.0 0 0 1 -3.0,3.0 H0 M4.700,9.200 L7.200,17.300"/>
      <path transform="translate(62.6,7.1)" d="M0,3.6 a3.6,3.6 0 0 1 7.2,0 V13.700000000000001 a3.6,3.6 0 0 1 -7.2,0 Z"/>
      <path transform="translate(76.8,7.1)" d="M7.2,5.6 V3.6 a3.6,3.6 0 0 0 -7.2,0 V13.700000000000001 a3.6,3.6 0 0 0 7.2,0 V9.6 H4.0"/>
      <path transform="translate(90.6,7.1)" d="M7.2,5 V3.6 a3.6,3.6 0 0 0 -7.2,0 V5.4 C0,9 7.2,9.4 7.2,12.4 V13.700000000000001 a3.6,3.6 0 0 1 -7.2,0 V12.3"/>
      <path transform="translate(112.8,7.1)" d="M0,17.3 V0 L7.2,17.3 V0" stroke-linejoin="bevel"/>
      <path transform="translate(127.6,7.1)" d="M7.2,0 H0 V17.3 H7.2 M0,8.399999999999999 H6.0"/>
      <path transform="translate(139.5,7.1)" d="M0,0 H7.8 M3.9,0 V17.3"/>
    </g>
    <rect x="103.0" y="22.6" width="3.600" height="3.400" fill="#ececec"/>
  </svg>
</div>
</body>
</html>
